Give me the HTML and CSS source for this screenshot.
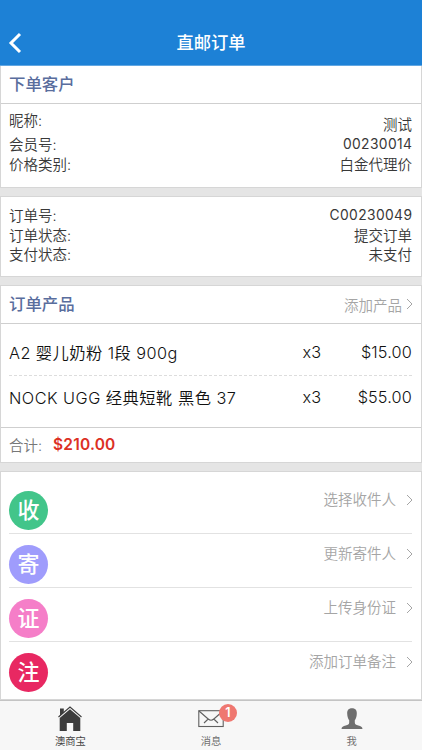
FILE: index.html
```html
<!DOCTYPE html>
<html lang="zh-CN">
<head>
<meta charset="utf-8">
<title>直邮订单</title>
<link rel="stylesheet" href="styles.css">
</head>
<body>
<header class="navbar">
  <svg class="back" viewBox="0 0 14 22"><path d="M12 2 L3 11 L12 20"/></svg>
  <h1>直邮订单</h1>
</header>
<main>
  <section class="card customer">
    <div class="card-head"><h2>下单客户</h2></div>
    <dl class="info">
      <div class="row nickname"><dt>昵称:</dt><dd>测试</dd></div>
      <div class="row member"><dt>会员号:</dt><dd class="num">00230014</dd></div>
      <div class="row"><dt>价格类别:</dt><dd>白金代理价</dd></div>
    </dl>
  </section>
  <section class="card status">
    <dl class="info">
      <div class="row"><dt>订单号:</dt><dd class="num">C00230049</dd></div>
      <div class="row"><dt>订单状态:</dt><dd>提交订单</dd></div>
      <div class="row"><dt>支付状态:</dt><dd>未支付</dd></div>
    </dl>
  </section>
  <section class="card products">
    <div class="card-head">
      <h2>订单产品</h2>
      <a class="link">添加产品<svg class="chev" viewBox="0 0 7 12"><path d="M1 1 L6 6 L1 11"/></svg></a>
    </div>
    <div class="product"><span class="name">A2 婴儿奶粉 1段 900g</span><span class="qty">x3</span><span class="price">$15.00</span></div>
    <div class="product"><span class="name wide">NOCK UGG 经典短靴 黑色 37</span><span class="qty">x3</span><span class="price">$55.00</span></div>
    <div class="total"><span>合计:</span><strong>$210.00</strong></div>
  </section>
  <section class="card actions">
    <div class="action"><i class="dot green">收</i><a class="link">选择收件人<svg class="chev" viewBox="0 0 7 12"><path d="M1 1 L6 6 L1 11"/></svg></a></div>
    <div class="action"><i class="dot violet">寄</i><a class="link">更新寄件人<svg class="chev" viewBox="0 0 7 12"><path d="M1 1 L6 6 L1 11"/></svg></a></div>
    <div class="action"><i class="dot pink">证</i><a class="link">上传身份证<svg class="chev" viewBox="0 0 7 12"><path d="M1 1 L6 6 L1 11"/></svg></a></div>
    <div class="action"><i class="dot red">注</i><a class="link">添加订单备注<svg class="chev" viewBox="0 0 7 12"><path d="M1 1 L6 6 L1 11"/></svg></a></div>
  </section>
</main>
<nav class="tabs">
  <a class="tab active">
    <span class="icon"><svg width="26" height="26" viewBox="0 0 26 26"><path fill="#3c3c3c" d="M3 2.500h3.800v4l-3.800 3.500z"/><path fill="none" stroke="#3c3c3c" stroke-width="1.1" d="M1.500 11 L13 1 L24.500 11"/><path fill="#3c3c3c" d="M2.700 12 L13 3.300 L23.300 12 V25 H16.200 V17 H9.800 V25 H2.700z"/></svg></span>
    <span>澳商宝</span>
  </a>
  <a class="tab">
    <span class="icon"><svg width="26" height="26" viewBox="0 0 26 26"><g fill="none" stroke="#606060" stroke-width="1.1"><rect x=".8" y="4.700" width="24.400" height="15.800"/><path d="M1 5 L10.200 13 Q13 15.500 15.800 13 L25 5 M6 17 L10.200 13 M20 17 L15.800 13"/></g></svg><b class="badge">1</b></span>
    <span>消息</span>
  </a>
  <a class="tab">
    <span class="icon"><svg width="26" height="26" viewBox="0 0 26 26"><path fill="#6e6e6e" d="M13 2.300c3.500 0 5 2.200 4.800 5.400-.1 3.100-1.100 5.200-2 6.600v2.200c0 1.800 1.300 2.400 3.500 3.100 2.600.8 4 1.300 4.200 3.400h-21c.2-2.100 1.600-2.600 4.200-3.400 2.200-.7 3.500-1.300 3.500-3.100v-2.200c-.9-1.400-1.900-3.500-2-6.600C8 4.500 9.500 2.300 13 2.300z"/></svg></span>
    <span>我</span>
  </a>
</nav>
</body>
</html>
```
FILE: styles.css
```css
* { box-sizing: border-box; }
html, body { height: 100%; }
body {
  margin: 0;
  display: flex;
  flex-direction: column;
  overflow: hidden;
  background: #e5e5e5;
  color: #383838;
  font-family: Inter, "Noto Sans CJK SC", sans-serif;
  font-size: 14.500px;
  font-weight: 350;
}
h1, h2, dl, dt, dd { margin: 0; }
.navbar {
  flex: none;
  height: 66px;
  padding-top: 20px;
  display: grid;
  grid-template-columns: 40px 1fr 40px;
  align-items: center;
  background: #1d81d6;
  border-bottom: 1px solid #62a7e2;
  color: #fff;
}
.navbar h1 { font-size: 17.300px; line-height: 26px; font-weight: 500; text-align: center; }
.back { width: 14px; height: 22px; margin-left: 8px; fill: none; stroke: #fff; stroke-width: 3; }
main { flex: none; height: 634px; display: flex; flex-direction: column; gap: 8px; }
.card { flex: none; background: #fff; border: 1px solid #d6d6d6; }
.card-head {
  height: 38px;
  padding: 0 8px 1px 8px;
  display: flex;
  align-items: center;
  justify-content: space-between;
  border-bottom: 1px solid #cfcfcf;
}
.card-head h2 { color: #596d9d; font-size: 16.400px; font-weight: 500; line-height: 24px; }
.customer { height: 122px; border-top: 0; }
.status { height: 81px; }
.products { height: 178px; }
.actions { height: 229px; padding: 8px 9px 0 8px; }
.info { padding: 9px 9px 0 8px; }
.row { display: flex; justify-content: space-between; height: 19.500px; line-height: 19.500px; }
.customer .info { padding-top: 7px; }
.row.nickname { height: 24px; }
.nickname dd { padding-top: 4px; }
.num { font-size: 13.800px; letter-spacing: .4px; margin-right: -.4px; font-weight: 400; }
.link { display: flex; align-items: center; color: #a5a5a5; }
.chev { width: 7px; height: 12px; margin-left: 4px; fill: none; stroke: #a5a5a5; stroke-width: 1; }
.product {
  display: grid;
  grid-template-columns: 1fr auto 91px;
  align-items: center;
  height: 52px;
  margin: 0 9px 0 8px;
  padding-top: 4px;
  color: #111;
  font-size: 16.300px;
  border-bottom: 1px dashed #ddd;
}
.product + .product { height: 51px; padding: 0 0 9px; border: 0; }
.name { letter-spacing: .43px; }
.name.wide { letter-spacing: .48px; }
.price { text-align: right; letter-spacing: .15px; }
.total { display: flex; align-items: center; gap: 11px; height: 36px; padding: 0 8px 3px; border-top: 1px solid #cfcfcf; color: #777; }
.total strong { color: #dc3024; font-size: 15.500px; font-weight: 600; letter-spacing: .2px; }
.action { display: flex; align-items: flex-start; justify-content: space-between; height: 54px; padding-top: 10px; border-bottom: 1px solid #e2e2e2; }
.action:last-child { border: 0; }
.action .link { line-height: 20px; margin-right: -1px; }
.action .chev { margin-left: 10px; }
.dot { width: 39px; height: 39px; margin-top: 1px; border-radius: 50%; color: #fff; font-size: 22px; font-style: normal; font-weight: 500; line-height: 38px; text-align: center; }
.green { background: #42c58a; }
.violet { background: #9f9cfc; }
.pink { background: #f57ec8; }
.red { background: #e82862; }
.tabs { flex: none; height: 50px; display: grid; grid-template-columns: repeat(3, 1fr); background: #f7f7f7; border-top: 1px solid #c4c4c4; }
.tab { display: flex; flex-direction: column; align-items: center; padding-top: 5px; font-size: 10.300px; line-height: 18px; font-weight: 400; color: #707070; }
.tab.active { color: #444; }
.icon { position: relative; height: 26px; }
.icon svg { display: block; }
.badge { position: absolute; left: 21px; top: -2px; width: 18px; height: 18px; border-radius: 50%; background: #ef7770; color: #fff; font-size: 12.500px; font-weight: 600; line-height: 18px; text-align: center; }
```
